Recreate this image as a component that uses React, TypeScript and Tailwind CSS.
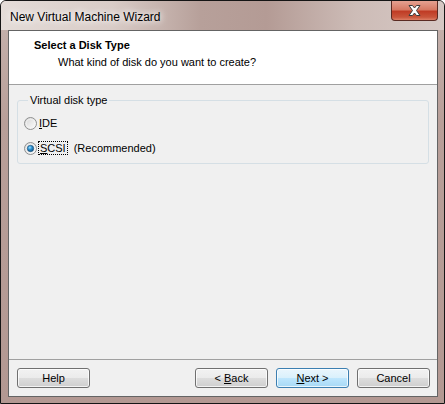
import React from "react";

const font = { fontFamily: '"Liberation Sans", Arial, sans-serif' };

function Radio({ checked }: { checked?: boolean }) {
  return (
    <svg width="13" height="13" viewBox="0 0 13 13" className="shrink-0">
      <defs>
        <linearGradient id="rfill" x1="0" y1="0" x2="1" y2="1">
          <stop offset="0" stopColor="#d4d4d4" />
          <stop offset="1" stopColor="#ffffff" />
        </linearGradient>
        <radialGradient id="rdot" cx="0.4" cy="0.35" r="0.7">
          <stop offset="0" stopColor="#9ee2ff" />
          <stop offset="0.45" stopColor="#2a8fd0" />
          <stop offset="1" stopColor="#0f4e7e" />
        </radialGradient>
      </defs>
      <circle cx="6.5" cy="6.5" r="6" fill="url(#rfill)" stroke="#8e8f8f" strokeWidth="1" />
      <circle cx="6.5" cy="6.5" r="4.3" fill="none" stroke="#f4f4f4" strokeWidth="0.8" />
      {checked && <circle cx="6.5" cy="6.5" r="3.2" fill="url(#rdot)" stroke="#1b4f77" strokeWidth="0.6" />}
    </svg>
  );
}

function Btn({ children, def }: { children: React.ReactNode; def?: boolean }) {
  return (
    <div
      className={
        "w-[73px] h-[20px] rounded-[3px] border flex items-center justify-center text-[11px] text-black " +
        (def
          ? "border-[#3c7fb1] bg-[linear-gradient(to_bottom,#eaf6fd_0%,#d9f0fc_50%,#bee6fd_51%,#a7d9f5_100%)]"
          : "border-[#707070] bg-[linear-gradient(to_bottom,#f2f2f2_0%,#ebebeb_50%,#dddddd_51%,#cfcfcf_100%)]")
      }
      style={{ boxShadow: "inset 0 0 0 1px rgba(255,255,255,0.75)" }}
    >
      {children}
    </div>
  );
}

export default function App() {
  return (
    <div
      className="w-[445px] h-[404px] flex flex-col rounded-t-[6px] border border-[#151515] bg-[linear-gradient(to_bottom,#c7b4af_0%,#b89f99_30%,#b39892_100%)] pl-[7px] pr-[6px] pb-[6px]"
      style={font}
    >
      {/* title bar */}
      <div className="h-[29px] relative flex items-start -mx-[7px] -mr-[6px] px-[9px] rounded-t-[5px] bg-[linear-gradient(to_right,#e4dcd8_0%,#d9ccc7_25%,#b7a09a_45%,#b49b95_60%,#cdbcb7_80%,#d6c8c4_100%)]">
        <div className="mt-[7px] text-[12px] text-black [text-shadow:0_0_6px_#ffffff,0_0_10px_#ffffff]">
          New Virtual Machine Wizard
        </div>
        <div className="absolute right-[6px] top-0 w-[47px] h-[20px] rounded-b-[4px] border border-t-0 border-[#5a2a22] bg-[linear-gradient(to_bottom,#e5a191_0%,#d77a64_45%,#c03c25_55%,#c9553b_85%,#dd7f66_100%)] flex items-center justify-center">
          <svg width="15" height="13" viewBox="0 0 15 13">
            <path
              d="M2 1.5 L5.5 1.5 L7.5 4 L9.5 1.5 L13 1.5 L9.5 6.5 L13 11.5 L9.5 11.5 L7.5 9 L5.5 11.5 L2 11.5 L5.5 6.5 Z"
              fill="#ffffff"
              stroke="#3b3b3b"
              strokeWidth="1"
              strokeLinejoin="round"
            />
          </svg>
        </div>
      </div>

      {/* client */}
      <div className="flex-1 flex flex-col border border-[#646464] bg-[#f0f0f0]">
        <div className="h-[53px] bg-white flex flex-col pl-[25px] pt-[8px]">
          <div className="text-[11px] font-bold text-black leading-[13px]">Select a Disk Type</div>
          <div className="text-[11px] text-black leading-[13px] pl-[24px] mt-[4px]">
            What kind of disk do you want to create?
          </div>
        </div>
        <div className="h-px bg-[#a0a0a0]" />
        <div className="flex-1 flex flex-col px-[8px] pt-[9px]">
          <fieldset className="w-[412px] h-[70px] border border-[#d5dfe5] rounded-[3px] pl-[6px]">
            <legend className="ml-[4px] px-[2px] text-[11px] text-black leading-[13px]">Virtual disk type</legend>
            <div className="flex items-center gap-[1px] mt-[9px] h-[14px]">
              <Radio />
              <span className="text-[11px] text-black px-px">
                <span className="underline">I</span>DE
              </span>
            </div>
            <div className="flex items-center gap-[1px] mt-[11px] h-[14px]">
              <Radio checked />
              <span className="text-[11px] text-black px-px border border-dotted border-black leading-[12px]">
                <span className="underline">S</span>CSI
              </span>
              <span className="text-[11px] text-black ml-[5px]">(Recommended)</span>
            </div>
          </fieldset>
        </div>
        <div className="h-px bg-[#a0a0a0]" />
        <div className="h-[36px] flex items-center px-[8px] pr-[7px]">
          <Btn>Help</Btn>
          <div className="flex-1" />
          <div className="flex gap-[8px]">
            <Btn>
              &lt; <span className="underline ml-[3px]">B</span>ack
            </Btn>
            <Btn def>
              <span className="underline">N</span>ext &gt;
            </Btn>
            <Btn>Cancel</Btn>
          </div>
        </div>
      </div>
    </div>
  );
}
